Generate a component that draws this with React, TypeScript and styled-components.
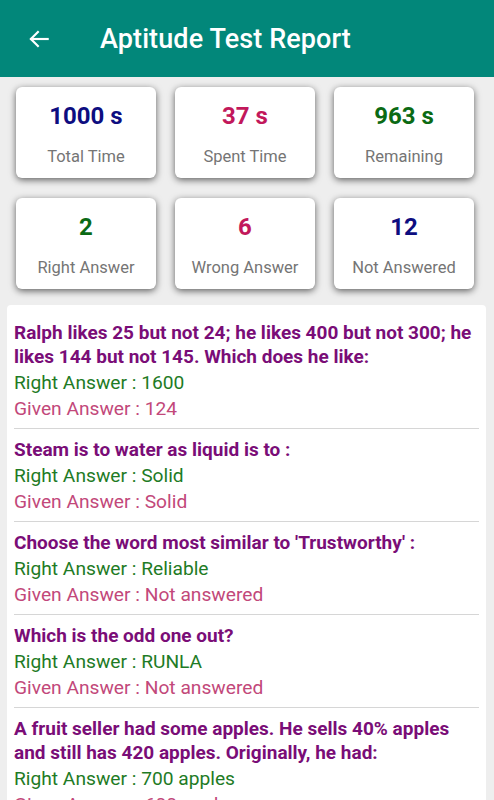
import React from "react";
import styled, { createGlobalStyle } from "styled-components";

const Global = createGlobalStyle`
  html, body { margin: 0; padding: 0; background: #eeeeee; }
  body { font-family: Roboto, "Noto Sans", sans-serif; overflow: hidden; }
  * { box-sizing: border-box; }
`;

const Page = styled.div`
  width: 494px;
  height: 800px;
  overflow: hidden;
  background: #eeeeee;
  display: flex;
  flex-direction: column;
`;

const Header = styled.header`
  height: 77px;
  flex: none;
  background: #02877a;
  display: flex;
  align-items: center;
  padding-left: 26px;
  gap: 48px;
  color: #fff;
`;

const Title = styled.h1`
  margin: 0;
  font-size: 27px;
  font-weight: 500;
  letter-spacing: 0.1px;
  color: #fff;
`;

const Stats = styled.div`
  display: grid;
  grid-template-columns: repeat(3, 140px);
  column-gap: 19px;
  row-gap: 20px;
  padding: 10px 0 0 16px;
`;

const Card = styled.div`
  height: 91px;
  background: #fff;
  border-radius: 6px;
  box-shadow: 0 2px 7px rgba(0, 0, 0, 0.6);
  display: flex;
  flex-direction: column;
  align-items: center;
  padding-top: 13px;
`;

const Value = styled.div<{ $color: string }>`
  font-size: 24px;
  font-weight: 700;
  line-height: 32px;
  color: ${(p) => p.$color};
`;

const Label = styled.div`
  margin-top: 14px;
  font-size: 16.5px;
  line-height: 22px;
  color: #757575;
`;

const Panel = styled.div`
  margin: 16px 8px 0 7px;
  background: #fff;
  border-radius: 4px;
  padding: 7px 7px 0 7px;
`;

const Item = styled.div`
  padding: 9px 0 6px 0;
  border-bottom: 1px solid #d6d6d6;
`;

const Question = styled.div`
  font-size: 19px;
  font-weight: 700;
  line-height: 24px;
  color: #7a0d77;
  padding-bottom: 1px;
`;

const Answer = styled.div<{ $color: string }>`
  font-size: 19.2px;
  line-height: 26px;
  color: ${(p) => p.$color};
`;

const stats = [
  { v: "1000 s", l: "Total Time", c: "#0d0d80" },
  { v: "37 s", l: "Spent Time", c: "#c2185b" },
  { v: "963 s", l: "Remaining", c: "#0b6a14" },
  { v: "2", l: "Right Answer", c: "#0b6a14" },
  { v: "6", l: "Wrong Answer", c: "#c2185b" },
  { v: "12", l: "Not Answered", c: "#0d0d80" },
];

const questions = [
  {
    q: "Ralph likes 25 but not 24; he likes 400 but not 300; he likes 144 but not 145. Which does he like:",
    r: "1600",
    g: "124",
  },
  { q: "Steam is to water as liquid is to :", r: "Solid", g: "Solid" },
  { q: "Choose the word most similar to 'Trustworthy' :", r: "Reliable", g: "Not answered" },
  { q: "Which is the odd one out?", r: "RUNLA", g: "Not answered" },
  {
    q: "A fruit seller had some apples. He sells 40% apples and still has 420 apples. Originally, he had:",
    r: "700 apples",
    g: "600 apples",
  },
];

const BackArrow = () => (
  <svg width="26" height="26" viewBox="0 0 24 24" fill="none" stroke="#fff" strokeWidth="2" strokeLinecap="square">
    <path d="M20 12H5" />
    <path d="M11 5.5L4.5 12L11 18.5" />
  </svg>
);

export default function App() {
  return (
    <Page>
      <Global />
      <Header>
        <BackArrow />
        <Title>Aptitude Test Report</Title>
      </Header>
      <Stats>
        {stats.map((s) => (
          <Card key={s.l}>
            <Value $color={s.c}>{s.v}</Value>
            <Label>{s.l}</Label>
          </Card>
        ))}
      </Stats>
      <Panel>
        {questions.map((q) => (
          <Item key={q.q}>
            <Question>{q.q}</Question>
            <Answer $color="#1e7b25">Right Answer : {q.r}</Answer>
            <Answer $color="#c2487a">Given Answer : {q.g}</Answer>
          </Item>
        ))}
      </Panel>
    </Page>
  );
}
